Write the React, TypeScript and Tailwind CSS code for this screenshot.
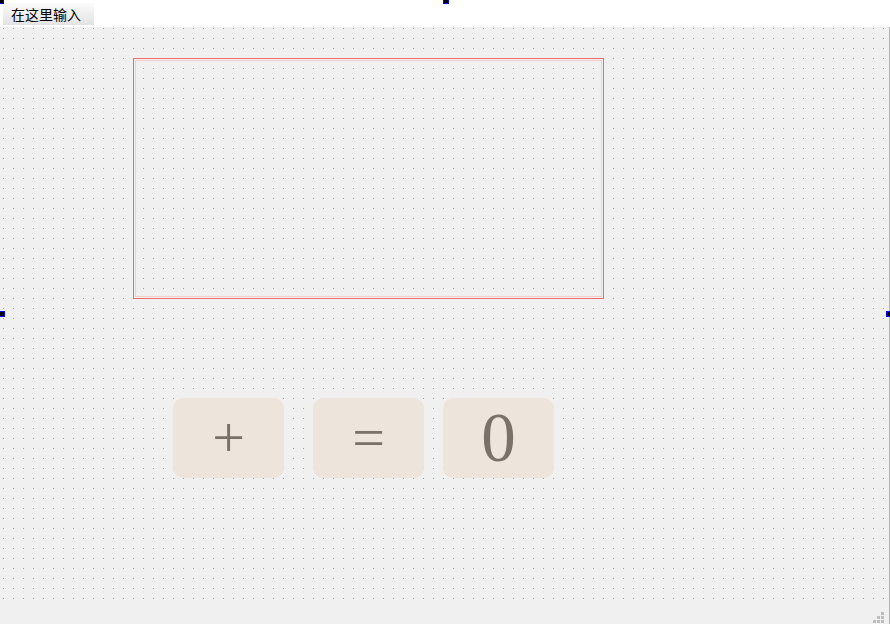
function Handle({ className }: { className: string }) {
  return (
    <div
      className={`absolute h-[6px] w-[6px] border border-[#0000ff] bg-black ${className}`}
    />
  );
}

function SizeGrip() {
  const cells = [
    [883, 613],
    [879, 617],
    [883, 617],
    [875, 621],
    [879, 621],
    [883, 621],
  ];
  return (
    <svg width="16" height="14" viewBox="874 611 16 14" className="mr-[1px] self-end">
      {cells.map(([x, y]) => (
        <rect key={`${x}-${y}`} x={x} y={y} width="3" height="3" fill="#bdbdbd" />
      ))}
    </svg>
  );
}

function KeyButton({ label, big = false }: { label: string; big?: boolean }) {
  return (
    <div
      className={`flex h-[80px] w-[111px] items-center justify-center rounded-[10px] bg-[#ede4db] text-[#7b7169] font-['Liberation_Serif',serif] leading-none ${
        big ? "text-[69px]" : "text-[58px]"
      }`}
    >
      {label}
    </div>
  );
}

export default function App() {
  return (
    <div className="relative flex h-[624px] w-[890px] flex-col overflow-hidden bg-white font-['Noto_Sans_CJK_SC','Noto_Sans',sans-serif]">
      {/* menu bar */}
      <div className="flex h-[27px] items-start bg-white">
        <div className="ml-[3px] mt-[3px] h-[22px] w-[91px] bg-gradient-to-b from-[#fbfbfb] to-[#e3e3e3] pl-[8px] text-[14px] leading-[22px] text-black">
          在这里输入
        </div>
      </div>

      {/* form canvas */}
      <div className="flex h-[573px] flex-col border-r border-[#b4b4b4] bg-[#f0f0f0] bg-[conic-gradient(at_1px_1px,transparent_75%,#9c9c9c_0)] bg-size-[10px_10px] bg-position-[3px_1px]">
        <div className="ml-[133px] mt-[31px] h-[241px] w-[471px] border border-[#f26a6a] p-px">
          <div className="h-full w-full border border-[#f6cccc]" />
        </div>

        <div className="ml-[173px] mt-[99px] flex gap-[29px]">
          <KeyButton label="+" />
          <KeyButton label="=" />
        </div>
      </div>

      {/* status bar */}
      <div className="flex h-[24px] justify-end border-r border-[#b4b4b4] bg-[#f0f0f0]">
        <SizeGrip />
      </div>

      <div className="absolute left-[443px] top-[398px]">
        <KeyButton label="0" big />
      </div>

      <Handle className="left-[-2px] top-[-2px]" />
      <Handle className="left-[443px] top-[-2px]" />
      <Handle className="left-[-1px] top-[311px]" />
      <Handle className="left-[886px] top-[311px]" />
    </div>
  );
}
